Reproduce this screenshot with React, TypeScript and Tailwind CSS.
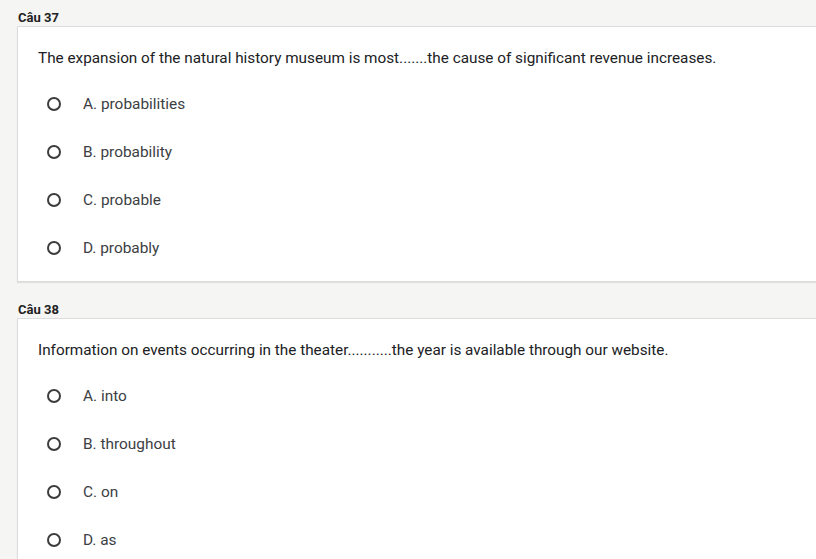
import React from "react";

const questions = [
  {
    label: "Câu 37",
    text: "The expansion of the natural history museum is most.......the cause of significant revenue increases.",
    options: ["A. probabilities", "B. probability", "C. probable", "D. probably"],
  },
  {
    label: "Câu 38",
    text: "Information on events occurring in the theater...........the year is available through our website.",
    options: ["A. into", "B. throughout", "C. on", "D. as"],
  },
];

function Radio() {
  return (
    <span className="box-border block h-[14px] w-[14px] shrink-0 rounded-full border-2 border-[#3c3c3c]" />
  );
}

export default function App() {
  return (
    <div
      className="h-[559px] w-[816px] overflow-hidden bg-[#f5f5f3] pl-[17px]"
      style={{ fontFamily: "Roboto, 'Noto Sans', sans-serif" }}
    >
      {questions.map((q, i) => (
        <div key={q.label} className={i === 0 ? "" : "mt-[10px]"}>
          <div className="pl-[1px] pt-[10px] pb-[1px] text-[13px] font-bold leading-[15px] text-[#222]">
            {q.label}
          </div>
          <div className="w-[830px] border border-[#dcdcdc] bg-white pb-[9px] pl-[20px] pt-[21px] shadow-[0_1px_1px_rgba(0,0,0,0.08)]">
            <div className="text-[15.3px] leading-[20px] text-[#202124]">{q.text}</div>
            <div className="mt-[12px] flex flex-col">
              {q.options.map((o) => (
                <div key={o} className="flex h-[48px] items-center">
                  <div className="ml-[9px] mr-[22px]">
                    <Radio />
                  </div>
                  <span className="text-[15.4px] leading-[20px] text-[#3c4043]">{o}</span>
                </div>
              ))}
            </div>
          </div>
        </div>
      ))}
    </div>
  );
}
